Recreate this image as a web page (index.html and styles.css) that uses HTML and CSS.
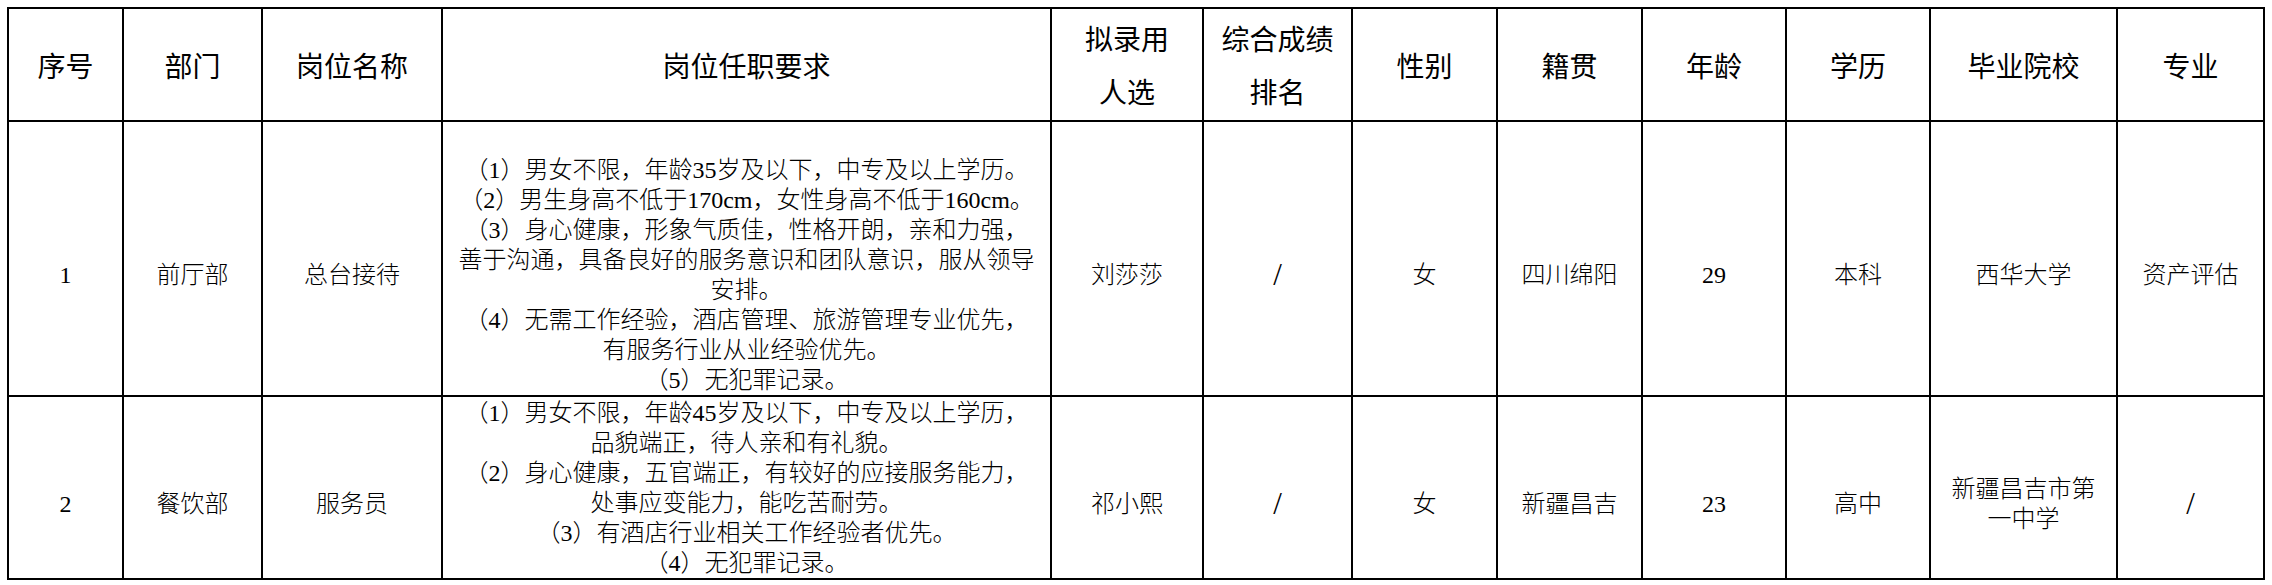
FILE: index.html
```html
<!DOCTYPE html>
<html lang="zh-CN">
<head>
<meta charset="utf-8">
<title>拟录用人员名单</title>
<link rel="stylesheet" href="styles.css">
</head>
<body>
<table class="roster">
  <colgroup>
    <col class="c-no">
    <col class="c-dept">
    <col class="c-post">
    <col class="c-req">
    <col class="c-name">
    <col class="c-rank">
    <col class="c-sex">
    <col class="c-origin">
    <col class="c-age">
    <col class="c-edu">
    <col class="c-school">
    <col class="c-major">
  </colgroup>
  <thead>
    <tr class="head-row">
      <th>序号</th>
      <th>部门</th>
      <th>岗位名称</th>
      <th>岗位任职要求</th>
      <th class="two-line">拟录用<br>人选</th>
      <th class="two-line">综合成绩<br>排名</th>
      <th>性别</th>
      <th>籍贯</th>
      <th>年龄</th>
      <th>学历</th>
      <th>毕业院校</th>
      <th>专业</th>
    </tr>
  </thead>
  <tbody>
    <tr class="row-1">
      <td>1</td>
      <td>前厅部</td>
      <td>总台接待</td>
      <td class="req req-1">（1）男女不限，年龄35岁及以下，中专及以上学历。<br>（2）男生身高不低于170cm，女性身高不低于160cm。<br>（3）身心健康，形象气质佳，性格开朗，亲和力强，<br>善于沟通，具备良好的服务意识和团队意识，服从领导<br>安排。<br>（4）无需工作经验，酒店管理、旅游管理专业优先，<br>有服务行业从业经验优先。<br>（5）无犯罪记录。</td>
      <td>刘莎莎</td>
      <td class="slash">/</td>
      <td>女</td>
      <td>四川绵阳</td>
      <td>29</td>
      <td>本科</td>
      <td>西华大学</td>
      <td>资产评估</td>
    </tr>
    <tr class="row-2">
      <td>2</td>
      <td>餐饮部</td>
      <td>服务员</td>
      <td class="req req-2">（1）男女不限，年龄45岁及以下，中专及以上学历，<br>品貌端正，待人亲和有礼貌。<br>（2）身心健康，五官端正，有较好的应接服务能力，<br>处事应变能力，能吃苦耐劳。<br>（3）有酒店行业相关工作经验者优先。<br>（4）无犯罪记录。</td>
      <td>祁小熙</td>
      <td class="slash">/</td>
      <td>女</td>
      <td>新疆昌吉</td>
      <td>23</td>
      <td>高中</td>
      <td class="school">新疆昌吉市第一中学</td>
      <td class="slash">/</td>
    </tr>
  </tbody>
</table>
</body>
</html>
```

FILE: styles.css
```css
html, body {
  margin: 0;
  padding: 0;
  background: #ffffff;
}

body {
  font-family: "Liberation Serif", "Noto Sans CJK SC", serif;
  color: #000000;
}

.roster {
  margin: 7px 0 0 7px;
  border-collapse: collapse;
  table-layout: fixed;
  width: 2258px;
}

.roster th,
.roster td {
  border: 2px solid #000000;
  text-align: center;
  vertical-align: middle;
  overflow: visible;
}

.c-no { width: 115px; }
.c-dept { width: 139px; }
.c-post { width: 180px; }
.c-req { width: 609px; }
.c-name { width: 152px; }
.c-rank { width: 149px; }
.c-sex { width: 145px; }
.c-origin { width: 145px; }
.c-age { width: 144px; }
.c-edu { width: 144px; }
.c-school { width: 187px; }
.c-major { width: 147px; }

.head-row {
  height: 113px;
}

.roster th {
  font-family: "Noto Sans CJK SC", sans-serif;
  font-size: 28px;
  font-weight: 400;
  line-height: 34px;
  padding: 0;
}

.roster th.two-line {
  line-height: 53px;
}

.row-1 { height: 275px; }
.row-2 { height: 183px; }

.roster td {
  font-size: 24px;
  font-weight: 300;
  line-height: 30px;
  padding: 33px 12px 0;
}

.roster td.req {
  padding: 0 6px;
  white-space: nowrap;
}

.roster td.req-1 {
  padding-top: 33px;
}

.roster td.req-2 {
  padding-top: 1px;
}

.roster td.school {
  padding-left: 20px;
  padding-right: 20px;
}

.roster td.slash {
  font-family: "Liberation Serif", serif;
  font-size: 31px;
  font-weight: 400;
}
```
